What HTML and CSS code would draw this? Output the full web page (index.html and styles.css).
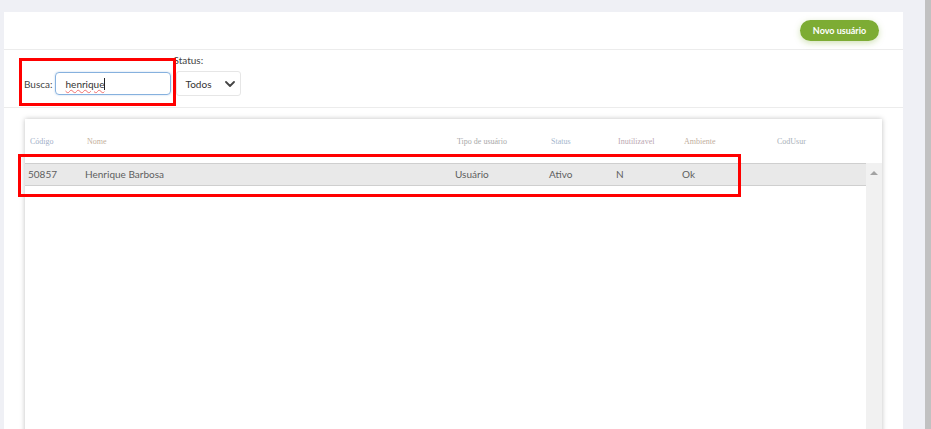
FILE: index.html
```html
<!DOCTYPE html>
<html lang="pt-BR">
<head>
    <meta charset="UTF-8">
    <meta name="viewport" content="width=device-width, initial-scale=1.0">
    <title>Usuários</title>
    <link rel="stylesheet" href="styles.css">
</head>
<body>
    <div class="page">
        <div class="card">
            <div class="card-header">
                <button type="button" class="btn-novo">Novo usuário</button>
            </div>

            <div class="filters">
                <div class="filter-busca">
                    <label class="filter-label" for="busca">Busca:</label>
                    <div class="fake-input" id="busca"><span class="typed">henrique</span><span class="caret"></span></div>
                </div>
                <div class="filter-status">
                    <label class="filter-label">Status:</label>
                    <div class="fake-select">
                        <span>Todos</span>
                        <svg class="chevron" viewBox="0 0 10 6" width="10" height="6">
                            <path d="M1 1 L5 5 L9 1" fill="none" stroke="#444" stroke-width="1.8" stroke-linecap="round" stroke-linejoin="round"/>
                        </svg>
                    </div>
                </div>
            </div>

            <div class="grid-panel">
                <div class="grid-head">
                    <div class="th c-cod">Código</div>
                    <div class="th c-nome">Nome</div>
                    <div class="th c-tipo">Tipo de usuário</div>
                    <div class="th c-status">Status</div>
                    <div class="th c-inut">Inutilizavel</div>
                    <div class="th c-amb">Ambiente</div>
                    <div class="th c-codusur">CodUsur</div>
                </div>
                <div class="grid-body">
                    <div class="rows">
                        <div class="row selected">
                            <div class="td">50857</div>
                            <div class="td">Henrique Barbosa</div>
                            <div class="td">Usuário</div>
                            <div class="td">Ativo</div>
                            <div class="td">N</div>
                            <div class="td">Ok</div>
                            <div class="td"></div>
                        </div>
                    </div>
                    <div class="vscroll">
                        <span class="arrow-up"></span>
                    </div>
                </div>
            </div>
        </div>
        <div class="page-scroll"></div>
    </div>

    <!-- marcações -->
    <div class="mark mark-busca"></div>
    <div class="mark mark-row"></div>
</body>
</html>
```

FILE: styles.css
```css
* {
    margin: 0;
    padding: 0;
    box-sizing: border-box;
}

body {
    font-family: Lato, 'Noto Sans', sans-serif;
    background: #eff0f5;
    height: 429px;
    overflow: hidden;
    color: #444;
}

.page {
    display: flex;
    height: 100%;
    padding-left: 4px;
}

.card {
    width: 899px;
    margin-top: 12px;
    background: #ffffff;
    height: 440px;
}

.page-scroll {
    margin-left: auto;
    width: 6px;
    background: #c1c1c1;
}

.card-header {
    height: 38px;
    border-bottom: 1px solid #ececec;
    display: flex;
    justify-content: flex-end;
    align-items: flex-start;
    padding: 8px 24px 0 0;
}

.btn-novo {
    width: 79px;
    height: 21px;
    border: none;
    border-radius: 11px;
    background: #7dac34;
    color: #ffffff;
    font-family: Lato, sans-serif;
    font-size: 9px;
    font-weight: 700;
    box-shadow: 0 2px 6px rgba(125, 172, 52, 0.35);
}

.filters {
    height: 58px;
    border-bottom: 1px solid #ececec;
    display: flex;
    align-items: flex-start;
    padding: 4px 0 0 20px;
}

.filter-label {
    font-size: 10px;
    color: #444;
}

.filter-busca {
    display: flex;
    align-items: center;
    margin-top: 18px;
    gap: 2px;
}

.fake-input {
    width: 116px;
    height: 23px;
    border: 1px solid #86b1de;
    border-radius: 4px;
    box-shadow: 0 0 2px rgba(80, 140, 210, 0.4);
    display: flex;
    align-items: center;
    padding-left: 10px;
    font-size: 10px;
    color: #333;
}

.typed {
    text-decoration: underline wavy #f07070;
    text-decoration-thickness: 1px;
    text-underline-offset: 1px;
}

.caret {
    width: 1px;
    height: 12px;
    background: #222;
}

.filter-status {
    display: flex;
    flex-direction: column;
    margin-left: 5px;
    gap: 5px;
}

.filter-status .filter-label {
    margin-left: -2px;
}

.fake-select {
    width: 65px;
    height: 25px;
    border: 1px solid #e6e6e6;
    border-radius: 3px;
    display: flex;
    align-items: center;
    justify-content: space-between;
    padding: 0 5px 0 9px;
    font-size: 10px;
    color: #333;
}

.grid-panel {
    margin: 11px 21px 0 21px;
    height: 320px;
    background: #ffffff;
    box-shadow: 0 0 5px rgba(0, 0, 0, 0.25);
    display: flex;
    flex-direction: column;
}

.grid-head,
.row {
    display: grid;
    grid-template-columns: 57px 370px 94px 67px 66px 93px 1fr;
}

.grid-head {
    height: 44px;
    align-items: center;
}

.th {
    font-family: 'Liberation Serif', serif;
    font-size: 8px;
    padding-left: 5px;
    padding-top: 1px;
}

.c-cod { color: #9fb0c8; }
.c-nome { color: #c4b09c; }
.c-tipo { color: #a9a9a9; }
.c-status { color: #a3b6cc; }
.c-inut { color: #bba8b2; }
.c-amb { color: #bfae9e; }
.c-codusur { color: #a9b0b8; }

.grid-body {
    flex: 1;
    display: flex;
}

.rows {
    flex: 1;
}

.row {
    height: 23px;
    align-items: center;
}

.row.selected {
    background: #e9e9e9;
    border-top: 1px solid #cfcfcf;
    border-bottom: 1px solid #cfcfcf;
}

.td {
    font-size: 10px;
    color: #5e5e5e;
    padding-left: 3px;
    padding-bottom: 2px;
}

.vscroll {
    width: 16px;
    background: #f1f1f1;
    display: flex;
    justify-content: center;
    padding-top: 8px;
}

.arrow-up {
    width: 0;
    height: 0;
    border-left: 4px solid transparent;
    border-right: 4px solid transparent;
    border-bottom: 4px solid #a3a3a3;
}

.mark {
    position: absolute;
    border: 3px solid #ff0000;
}

.mark-busca {
    left: 19px;
    top: 58px;
    width: 157px;
    height: 48px;
}

.mark-row {
    left: 18px;
    top: 154px;
    width: 723px;
    height: 43px;
}
```
